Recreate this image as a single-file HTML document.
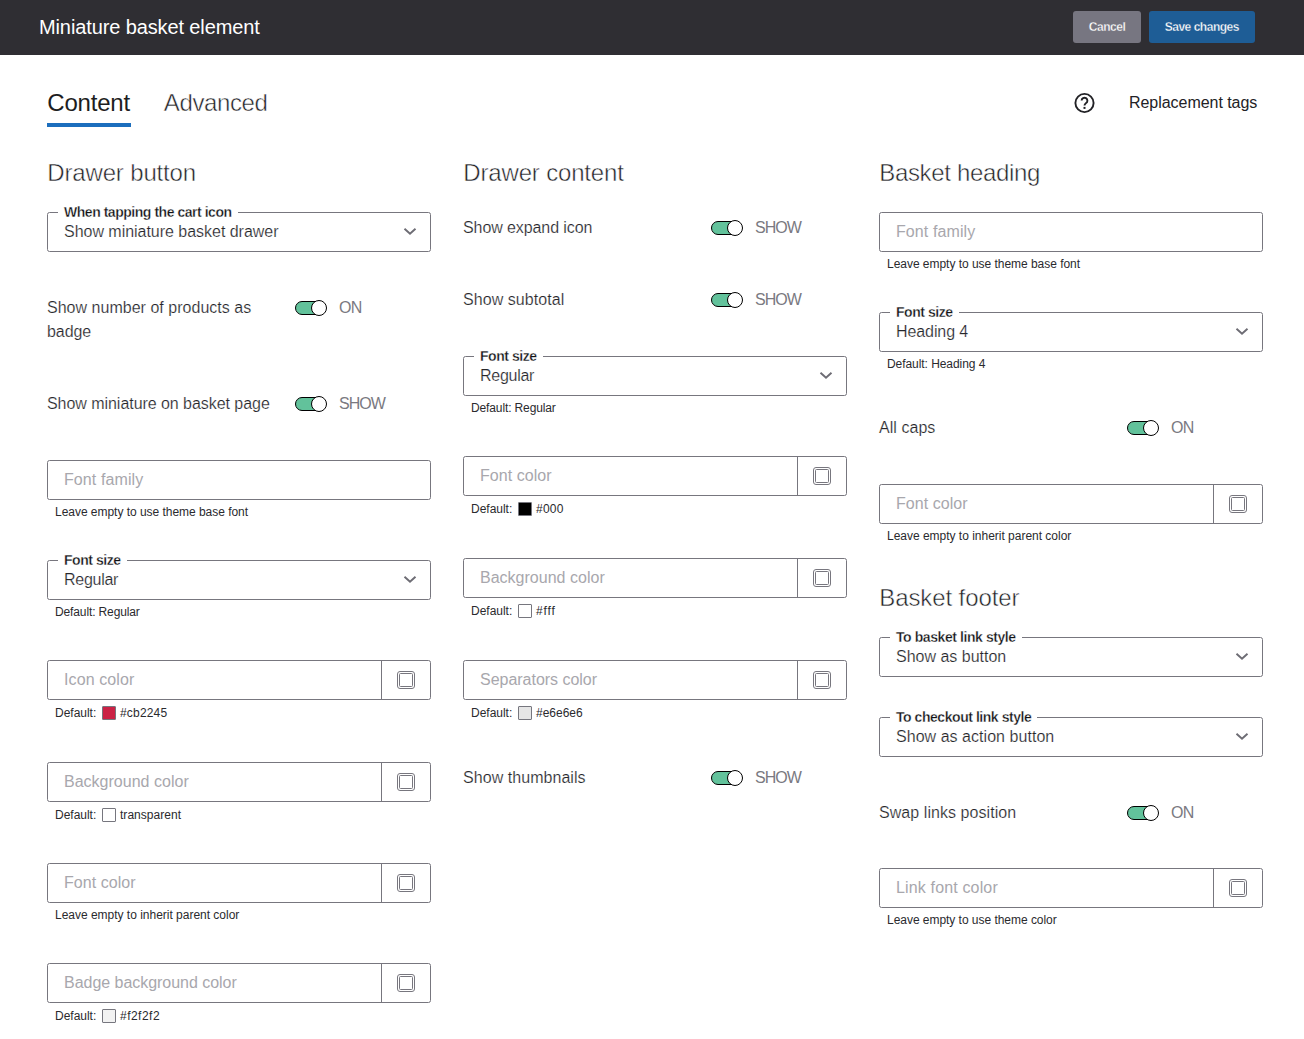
<!DOCTYPE html>
<html><head><meta charset="utf-8"><title>Miniature basket element</title><style>
*{margin:0;padding:0;box-sizing:border-box}
html,body{width:1304px;height:1039px;overflow:hidden;background:#fff;font-family:"Liberation Sans",sans-serif}
.t{position:absolute;white-space:nowrap;line-height:1}
.bg{background:#fff;padding:0 6px;margin-left:-6px;-webkit-text-stroke:0.3px #fff}
.thin{-webkit-text-stroke:0.5px #fff}
.t16{-webkit-text-stroke:0.2px #fff}
#hdr{position:absolute;left:0;top:0;width:1304px;height:55px;background:#2f2e33}
.btn{position:absolute;top:11px;height:32px;border-radius:3px}
.box{position:absolute;border:1px solid #77767e;border-radius:2.5px;background:#fff}
.sep{position:absolute;width:1px;height:40px;background:#77767e}
.ic{position:absolute;overflow:visible}
.sw{position:absolute;width:14px;height:14px;border:1px solid #76767e;border-radius:1px}
.tg{position:absolute;width:32px;height:16px}
.tr{position:absolute;left:0;top:1px;width:30px;height:14px;border-radius:7px;background:#62c29b;border:1.7px solid #000}
.kn{position:absolute;left:16px;top:0;width:16px;height:16px;border-radius:50%;background:#fff;border:1.8px solid #000}
</style></head>
<body>
<div id="hdr"></div>
<div class="t" style="left:39px;top:17px;font-size:20px;color:#ffffff;letter-spacing:-0.117px">Miniature basket element</div>
<div class="btn" style="left:1073px;width:68px;background:#777681"></div>
<div class="btn" style="left:1149px;width:106px;background:#1e5d96"></div>
<div class="t" style="left:1088.7px;top:21px;font-size:12px;color:#ffffff;letter-spacing:-0.450px;font-weight:700;-webkit-text-stroke:0.3px #777681">Cancel</div>
<div class="t" style="left:1164.7px;top:21px;font-size:12px;color:#ffffff;letter-spacing:-0.481px;font-weight:700;-webkit-text-stroke:0.3px #1e5d96">Save changes</div>
<div class="t" style="left:47.3px;top:91px;font-size:24px;color:#1d1d21;letter-spacing:-0.201px">Content</div>
<div style="position:absolute;left:47px;top:123px;width:84px;height:4px;background:#1c6ebd"></div>
<div class="t thin" style="left:163.8px;top:91px;font-size:24px;color:#222226;letter-spacing:-0.383px">Advanced</div>
<svg class="ic" style="left:1072px;top:91px" width="24" height="24" viewBox="0 0 24 24"><circle cx="12.5" cy="12" r="9.1" fill="none" stroke="#222226" stroke-width="1.9"/><path d="M9.6 9.6 A2.9 2.9 0 1 1 13.9 12.2 C13 12.8 12.5 13.3 12.5 14.6" fill="none" stroke="#222226" stroke-width="1.9"/><rect x="11.5" y="15.9" width="2" height="2" fill="#222226"/></svg>
<div class="t" style="left:1129px;top:95px;font-size:16px;color:#222226;letter-spacing:-0.044px">Replacement tags</div>
<div class="t thin" style="left:47.3px;top:161px;font-size:24px;color:#222226;letter-spacing:-0.156px">Drawer button</div>
<div class="t thin" style="left:463.3px;top:161px;font-size:24px;color:#222226;letter-spacing:-0.167px">Drawer content</div>
<div class="t thin" style="left:879.3px;top:161px;font-size:24px;color:#222226;letter-spacing:-0.344px">Basket heading</div>
<div class="box" style="left:47px;top:212px;width:384px;height:40px"></div>
<div class="t bg" style="left:64px;top:205px;font-size:14px;color:#111114;letter-spacing:-0.465px;font-weight:700">When tapping the cart icon</div>
<div class="t t16" style="left:64px;top:224px;font-size:16px;color:#26262a;letter-spacing:-0.026px">Show miniature basket drawer</div>
<svg class="ic" style="left:403px;top:227px" width="14" height="10" viewBox="0 0 14 10"><path d="M1.5 1.7 L7 6.8 L12.5 1.7" fill="none" stroke="#6d6c74" stroke-width="1.9"/></svg>
<div class="t t16" style="left:47px;top:300px;font-size:16px;color:#26262a;letter-spacing:0.022px">Show number of products as</div>
<div class="t t16" style="left:47px;top:324px;font-size:16px;color:#26262a;letter-spacing:-0.080px">badge</div>
<div class="tg" style="left:295px;top:300px"><div class="tr"></div><div class="kn"></div></div>
<div class="t" style="left:339px;top:300px;font-size:16px;color:#7a7981;letter-spacing:-0.811px">ON</div>
<div class="t t16" style="left:47px;top:396px;font-size:16px;color:#26262a;letter-spacing:-0.047px">Show miniature on basket page</div>
<div class="tg" style="left:295px;top:396px"><div class="tr"></div><div class="kn"></div></div>
<div class="t" style="left:339px;top:396px;font-size:16px;color:#7a7981;letter-spacing:-0.937px">SHOW</div>
<div class="box" style="left:47px;top:460px;width:384px;height:40px"></div>
<div class="t" style="left:64px;top:472px;font-size:16px;color:#a8a7ad;letter-spacing:0.099px">Font family</div>
<div class="t" style="left:55px;top:506px;font-size:12px;color:#2a2a2e;letter-spacing:-0.031px">Leave empty to use theme base font</div>
<div class="box" style="left:47px;top:560px;width:384px;height:40px"></div>
<div class="t bg" style="left:64px;top:553px;font-size:14px;color:#111114;letter-spacing:-0.459px;font-weight:700">Font size</div>
<div class="t t16" style="left:64px;top:572px;font-size:16px;color:#26262a;letter-spacing:-0.281px">Regular</div>
<svg class="ic" style="left:403px;top:575px" width="14" height="10" viewBox="0 0 14 10"><path d="M1.5 1.7 L7 6.8 L12.5 1.7" fill="none" stroke="#6d6c74" stroke-width="1.9"/></svg>
<div class="t" style="left:55px;top:606px;font-size:12px;color:#2a2a2e;letter-spacing:-0.124px">Default: Regular</div>
<div class="box" style="left:47px;top:660px;width:384px;height:40px"></div>
<div class="sep" style="left:381px;top:660px"></div>
<svg class="ic" style="left:396px;top:670px" width="20" height="20" viewBox="0 0 20 20"><rect x="1.5" y="1.5" width="17" height="17" rx="2.5" fill="none" stroke="#77767e" stroke-width="1"/><rect x="3.5" y="3.5" width="13" height="13" rx="1" fill="none" stroke="#77767e" stroke-width="1"/></svg>
<div class="t" style="left:64px;top:672px;font-size:16px;color:#a8a7ad;letter-spacing:0.108px">Icon color</div>
<div class="t" style="left:55px;top:707px;font-size:12px;color:#2a2a2e;letter-spacing:-0.016px">Default:</div>
<div class="sw" style="left:102px;top:706px;background:#cb2245"></div>
<div class="t" style="left:120px;top:707px;font-size:12px;color:#2a2a2e;letter-spacing:0.178px">#cb2245</div>
<div class="box" style="left:47px;top:762px;width:384px;height:40px"></div>
<div class="sep" style="left:381px;top:762px"></div>
<svg class="ic" style="left:396px;top:772px" width="20" height="20" viewBox="0 0 20 20"><rect x="1.5" y="1.5" width="17" height="17" rx="2.5" fill="none" stroke="#77767e" stroke-width="1"/><rect x="3.5" y="3.5" width="13" height="13" rx="1" fill="none" stroke="#77767e" stroke-width="1"/></svg>
<div class="t" style="left:64px;top:774px;font-size:16px;color:#a8a7ad;letter-spacing:0.013px">Background color</div>
<div class="t" style="left:55px;top:809px;font-size:12px;color:#2a2a2e;letter-spacing:-0.016px">Default:</div>
<div class="sw" style="left:102px;top:808px;background:#ffffff"></div>
<div class="t" style="left:120px;top:809px;font-size:12px;color:#2a2a2e;letter-spacing:0.039px">transparent</div>
<div class="box" style="left:47px;top:863px;width:384px;height:40px"></div>
<div class="sep" style="left:381px;top:863px"></div>
<svg class="ic" style="left:396px;top:873px" width="20" height="20" viewBox="0 0 20 20"><rect x="1.5" y="1.5" width="17" height="17" rx="2.5" fill="none" stroke="#77767e" stroke-width="1"/><rect x="3.5" y="3.5" width="13" height="13" rx="1" fill="none" stroke="#77767e" stroke-width="1"/></svg>
<div class="t" style="left:64px;top:875px;font-size:16px;color:#a8a7ad;letter-spacing:0.050px">Font color</div>
<div class="t" style="left:55px;top:909px;font-size:12px;color:#2a2a2e;letter-spacing:-0.014px">Leave empty to inherit parent color</div>
<div class="box" style="left:47px;top:963px;width:384px;height:40px"></div>
<div class="sep" style="left:381px;top:963px"></div>
<svg class="ic" style="left:396px;top:973px" width="20" height="20" viewBox="0 0 20 20"><rect x="1.5" y="1.5" width="17" height="17" rx="2.5" fill="none" stroke="#77767e" stroke-width="1"/><rect x="3.5" y="3.5" width="13" height="13" rx="1" fill="none" stroke="#77767e" stroke-width="1"/></svg>
<div class="t" style="left:64px;top:975px;font-size:16px;color:#a8a7ad;letter-spacing:-0.031px">Badge background color</div>
<div class="t" style="left:55px;top:1010px;font-size:12px;color:#2a2a2e;letter-spacing:-0.016px">Default:</div>
<div class="sw" style="left:102px;top:1009px;background:#f2f2f2"></div>
<div class="t" style="left:120px;top:1010px;font-size:12px;color:#2a2a2e;letter-spacing:0.480px">#f2f2f2</div>
<div class="t t16" style="left:463px;top:220px;font-size:16px;color:#26262a;letter-spacing:-0.089px">Show expand icon</div>
<div class="tg" style="left:711px;top:220px"><div class="tr"></div><div class="kn"></div></div>
<div class="t" style="left:755px;top:220px;font-size:16px;color:#7a7981;letter-spacing:-0.937px">SHOW</div>
<div class="t t16" style="left:463px;top:292px;font-size:16px;color:#26262a;letter-spacing:0.063px">Show subtotal</div>
<div class="tg" style="left:711px;top:292px"><div class="tr"></div><div class="kn"></div></div>
<div class="t" style="left:755px;top:292px;font-size:16px;color:#7a7981;letter-spacing:-0.937px">SHOW</div>
<div class="box" style="left:463px;top:356px;width:384px;height:40px"></div>
<div class="t bg" style="left:480px;top:349px;font-size:14px;color:#111114;letter-spacing:-0.459px;font-weight:700">Font size</div>
<div class="t t16" style="left:480px;top:368px;font-size:16px;color:#26262a;letter-spacing:-0.281px">Regular</div>
<svg class="ic" style="left:819px;top:371px" width="14" height="10" viewBox="0 0 14 10"><path d="M1.5 1.7 L7 6.8 L12.5 1.7" fill="none" stroke="#6d6c74" stroke-width="1.9"/></svg>
<div class="t" style="left:471px;top:402px;font-size:12px;color:#2a2a2e;letter-spacing:-0.124px">Default: Regular</div>
<div class="box" style="left:463px;top:456px;width:384px;height:40px"></div>
<div class="sep" style="left:797px;top:456px"></div>
<svg class="ic" style="left:812px;top:466px" width="20" height="20" viewBox="0 0 20 20"><rect x="1.5" y="1.5" width="17" height="17" rx="2.5" fill="none" stroke="#77767e" stroke-width="1"/><rect x="3.5" y="3.5" width="13" height="13" rx="1" fill="none" stroke="#77767e" stroke-width="1"/></svg>
<div class="t" style="left:480px;top:468px;font-size:16px;color:#a8a7ad;letter-spacing:0.050px">Font color</div>
<div class="t" style="left:471px;top:503px;font-size:12px;color:#2a2a2e;letter-spacing:-0.016px">Default:</div>
<div class="sw" style="left:518px;top:502px;background:#000000"></div>
<div class="t" style="left:536px;top:503px;font-size:12px;color:#2a2a2e;letter-spacing:0.217px">#000</div>
<div class="box" style="left:463px;top:558px;width:384px;height:40px"></div>
<div class="sep" style="left:797px;top:558px"></div>
<svg class="ic" style="left:812px;top:568px" width="20" height="20" viewBox="0 0 20 20"><rect x="1.5" y="1.5" width="17" height="17" rx="2.5" fill="none" stroke="#77767e" stroke-width="1"/><rect x="3.5" y="3.5" width="13" height="13" rx="1" fill="none" stroke="#77767e" stroke-width="1"/></svg>
<div class="t" style="left:480px;top:570px;font-size:16px;color:#a8a7ad;letter-spacing:0.013px">Background color</div>
<div class="t" style="left:471px;top:605px;font-size:12px;color:#2a2a2e;letter-spacing:-0.016px">Default:</div>
<div class="sw" style="left:518px;top:604px;background:#ffffff"></div>
<div class="t" style="left:536px;top:605px;font-size:12px;color:#2a2a2e;letter-spacing:0.904px">#fff</div>
<div class="box" style="left:463px;top:660px;width:384px;height:40px"></div>
<div class="sep" style="left:797px;top:660px"></div>
<svg class="ic" style="left:812px;top:670px" width="20" height="20" viewBox="0 0 20 20"><rect x="1.5" y="1.5" width="17" height="17" rx="2.5" fill="none" stroke="#77767e" stroke-width="1"/><rect x="3.5" y="3.5" width="13" height="13" rx="1" fill="none" stroke="#77767e" stroke-width="1"/></svg>
<div class="t" style="left:480px;top:672px;font-size:16px;color:#a8a7ad;letter-spacing:-0.021px">Separators color</div>
<div class="t" style="left:471px;top:707px;font-size:12px;color:#2a2a2e;letter-spacing:-0.016px">Default:</div>
<div class="sw" style="left:518px;top:706px;background:#e6e6e6"></div>
<div class="t" style="left:536px;top:707px;font-size:12px;color:#2a2a2e;letter-spacing:-0.013px">#e6e6e6</div>
<div class="t t16" style="left:463px;top:770px;font-size:16px;color:#26262a;letter-spacing:0.053px">Show thumbnails</div>
<div class="tg" style="left:711px;top:770px"><div class="tr"></div><div class="kn"></div></div>
<div class="t" style="left:755px;top:770px;font-size:16px;color:#7a7981;letter-spacing:-0.937px">SHOW</div>
<div class="box" style="left:879px;top:212px;width:384px;height:40px"></div>
<div class="t" style="left:896px;top:224px;font-size:16px;color:#a8a7ad;letter-spacing:0.099px">Font family</div>
<div class="t" style="left:887px;top:258px;font-size:12px;color:#2a2a2e;letter-spacing:-0.031px">Leave empty to use theme base font</div>
<div class="box" style="left:879px;top:312px;width:384px;height:40px"></div>
<div class="t bg" style="left:896px;top:305px;font-size:14px;color:#111114;letter-spacing:-0.459px;font-weight:700">Font size</div>
<div class="t t16" style="left:896px;top:324px;font-size:16px;color:#26262a;letter-spacing:-0.089px">Heading 4</div>
<svg class="ic" style="left:1235px;top:327px" width="14" height="10" viewBox="0 0 14 10"><path d="M1.5 1.7 L7 6.8 L12.5 1.7" fill="none" stroke="#6d6c74" stroke-width="1.9"/></svg>
<div class="t" style="left:887px;top:358px;font-size:12px;color:#2a2a2e;letter-spacing:-0.060px">Default: Heading 4</div>
<div class="t t16" style="left:879px;top:420px;font-size:16px;color:#26262a;letter-spacing:0.046px">All caps</div>
<div class="tg" style="left:1127px;top:420px"><div class="tr"></div><div class="kn"></div></div>
<div class="t" style="left:1171px;top:420px;font-size:16px;color:#7a7981;letter-spacing:-0.811px">ON</div>
<div class="box" style="left:879px;top:484px;width:384px;height:40px"></div>
<div class="sep" style="left:1213px;top:484px"></div>
<svg class="ic" style="left:1228px;top:494px" width="20" height="20" viewBox="0 0 20 20"><rect x="1.5" y="1.5" width="17" height="17" rx="2.5" fill="none" stroke="#77767e" stroke-width="1"/><rect x="3.5" y="3.5" width="13" height="13" rx="1" fill="none" stroke="#77767e" stroke-width="1"/></svg>
<div class="t" style="left:896px;top:496px;font-size:16px;color:#a8a7ad;letter-spacing:0.050px">Font color</div>
<div class="t" style="left:887px;top:530px;font-size:12px;color:#2a2a2e;letter-spacing:-0.014px">Leave empty to inherit parent color</div>
<div class="t thin" style="left:879.3px;top:586px;font-size:24px;color:#222226;letter-spacing:-0.105px">Basket footer</div>
<div class="box" style="left:879px;top:637px;width:384px;height:40px"></div>
<div class="t bg" style="left:896px;top:630px;font-size:14px;color:#111114;letter-spacing:-0.421px;font-weight:700">To basket link style</div>
<div class="t t16" style="left:896px;top:649px;font-size:16px;color:#26262a;letter-spacing:-0.006px">Show as button</div>
<svg class="ic" style="left:1235px;top:652px" width="14" height="10" viewBox="0 0 14 10"><path d="M1.5 1.7 L7 6.8 L12.5 1.7" fill="none" stroke="#6d6c74" stroke-width="1.9"/></svg>
<div class="box" style="left:879px;top:717px;width:384px;height:40px"></div>
<div class="t bg" style="left:896px;top:710px;font-size:14px;color:#111114;letter-spacing:-0.451px;font-weight:700">To checkout link style</div>
<div class="t t16" style="left:896px;top:729px;font-size:16px;color:#26262a;letter-spacing:0.039px">Show as action button</div>
<svg class="ic" style="left:1235px;top:732px" width="14" height="10" viewBox="0 0 14 10"><path d="M1.5 1.7 L7 6.8 L12.5 1.7" fill="none" stroke="#6d6c74" stroke-width="1.9"/></svg>
<div class="t t16" style="left:879px;top:805px;font-size:16px;color:#26262a;letter-spacing:0.060px">Swap links position</div>
<div class="tg" style="left:1127px;top:805px"><div class="tr"></div><div class="kn"></div></div>
<div class="t" style="left:1171px;top:805px;font-size:16px;color:#7a7981;letter-spacing:-0.811px">ON</div>
<div class="box" style="left:879px;top:868px;width:384px;height:40px"></div>
<div class="sep" style="left:1213px;top:868px"></div>
<svg class="ic" style="left:1228px;top:878px" width="20" height="20" viewBox="0 0 20 20"><rect x="1.5" y="1.5" width="17" height="17" rx="2.5" fill="none" stroke="#77767e" stroke-width="1"/><rect x="3.5" y="3.5" width="13" height="13" rx="1" fill="none" stroke="#77767e" stroke-width="1"/></svg>
<div class="t" style="left:896px;top:880px;font-size:16px;color:#a8a7ad;letter-spacing:0.152px">Link font color</div>
<div class="t" style="left:887px;top:914px;font-size:12px;color:#2a2a2e;letter-spacing:-0.035px">Leave empty to use theme color</div>
</body></html>
